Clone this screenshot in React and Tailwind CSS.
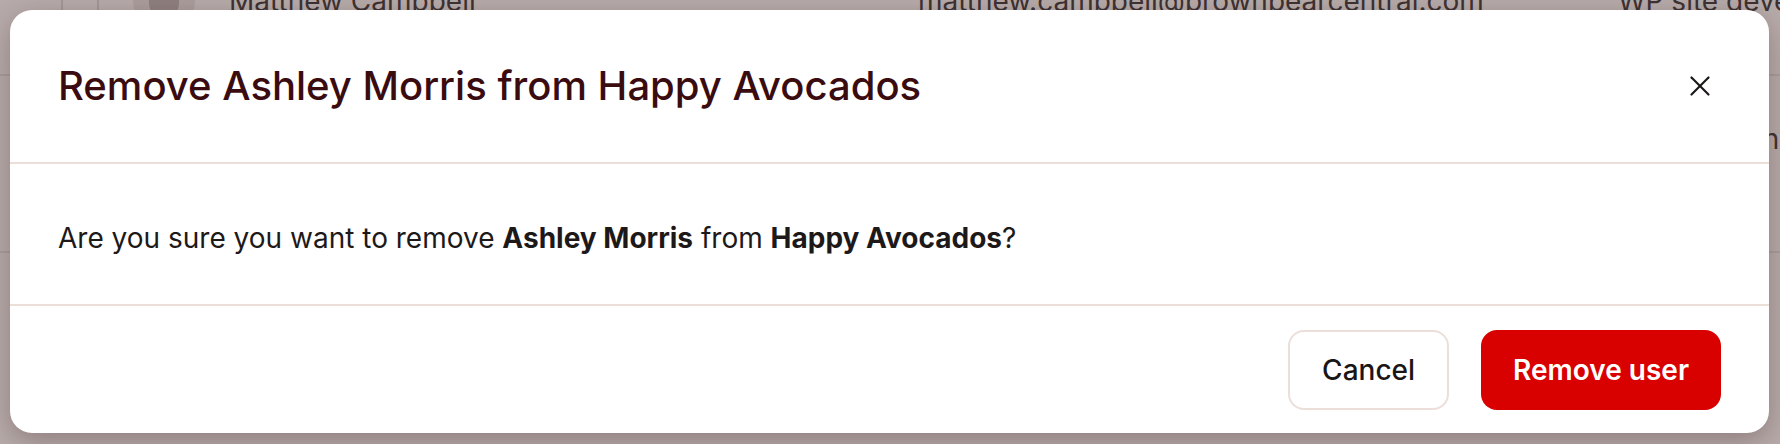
import { X } from "lucide-react";

// Members table sitting behind the dialog overlay
function MembersBackdrop() {
  return (
    <div className="-mt-[72px] text-[28px] text-[#3d3131]">
      <div className="flex h-[148px] items-center border-b-2 border-[#a99e9d]">
        <div className="h-full w-[61px] shrink-0" />
        <div className="h-full w-[38px] shrink-0 border-x-2 border-[#a39796]" />
        <div className="ml-[34px] flex h-[62px] w-[62px] shrink-0 items-center justify-center rounded-full bg-[#aa9e9d]">
          <div className="h-[34px] w-[30px] rounded-full bg-[#8f8080]" />
        </div>
        <span className="ml-[34px] w-[689px] shrink-0 whitespace-nowrap">Matthew Campbell</span>
        <span className="w-[700px] shrink-0 whitespace-nowrap">matthew.campbell@brownbearcentral.com</span>
        <span className="shrink-0 whitespace-nowrap">WP site developer</span>
      </div>
      <div className="flex h-[177px] items-start border-b-2 border-[#a99e9d] pt-[42px]">
        <span className="ml-[1618px] shrink-0 whitespace-nowrap leading-[42px]">Team admin</span>
      </div>
    </div>
  );
}

export default function App() {
  return (
    <div className="relative h-[444px] w-full overflow-hidden bg-[#b7acab] font-['Inter',sans-serif]">
      <MembersBackdrop />

      <div className="absolute left-[10px] top-[10px] flex h-[423px] w-[1759px] flex-col rounded-[22px] bg-white shadow-[0_8px_28px_rgba(70,40,40,0.35)]">
        <div className="flex h-[154px] items-center justify-between border-b-2 border-[#ecdfd9] pl-[48px] pr-[50px]">
          <h2 className="text-[40px] font-medium leading-[56px] text-[#3a0c10]">
            Remove Ashley Morris from Happy Avocados
          </h2>
          <button className="flex h-[38px] w-[38px] items-center justify-center text-[#1c1717]">
            <X size={34} strokeWidth={2.2} absoluteStrokeWidth />
          </button>
        </div>

        <div className="flex h-[142px] items-center border-b-2 border-[#ecdfd9] px-[48px] pt-[8px]">
          <p className="text-[28px] leading-[44px] text-[#1e1919]">
            Are you sure you want to remove <span className="font-bold">Ashley Morris</span> from{" "}
            <span className="font-bold">Happy Avocados</span>?
          </p>
        </div>

        <div className="flex flex-1 items-center justify-end gap-[32px] px-[48px]">
          <button className="h-[80px] rounded-[16px] border-2 border-[#ecdfd9] bg-white px-[32px] text-[28px] font-medium text-[#1a1616]">
            Cancel
          </button>
          <button className="h-[80px] rounded-[16px] bg-[#d90000] px-[32px] text-[28px] font-semibold text-white">
            Remove user
          </button>
        </div>
      </div>
    </div>
  );
}
